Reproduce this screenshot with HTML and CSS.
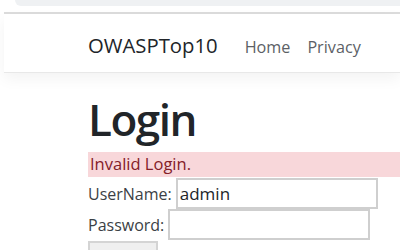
FILE: index.html
```html
<!DOCTYPE html>
<html lang="en">
<head>
    <meta charset="UTF-8">
    <meta name="viewport" content="width=device-width, initial-scale=1.0">
    <title>Login - OWASPTop10</title>
    <link rel="stylesheet" href="styles.css">
</head>
<body>
    <div class="chrome"></div>
    <div class="page">
        <header class="navbar">
            <a class="brand" href="#">OWASPTop10</a>
            <nav class="links">
                <a href="#">Home</a>
                <a href="#">Privacy</a>
            </nav>
        </header>

        <main class="content">
            <h1>Login</h1>
            <div class="alert">Invalid Login.</div>
            <form class="login">
                <div class="row first">
                    <label for="user">UserName:</label>
                    <input id="user" type="text" value="admin">
                </div>
                <div class="row">
                    <label for="pass">Password:</label>
                    <input id="pass" type="password">
                </div>
                <button type="submit">Login</button>
            </form>
        </main>
    </div>
</body>
</html>
```

FILE: styles.css
```css
/* General Styles */
body {
    margin: 0;
    font-family: "Open Sans", "Noto Sans", sans-serif;
    color: #212529;
    background-color: #fff;
    overflow: hidden;
}
a {
    text-decoration: none;
}

/* Browser strip at the top */
.chrome {
    height: 6px;
    margin-left: 15px;
    background-color: #eff1f3;
    border-bottom-left-radius: 12px;
}
.page {
    margin-top: 6px;
    margin-left: 4px;
    border-top: 2px solid #dcdcdc;
}

/* Navbar */
.navbar {
    display: flex;
    align-items: baseline;
    height: 59px;
    box-sizing: border-box;
    padding: 17px 0 0 84px;
    border-bottom: 1px solid #e8e8e8;
    box-shadow: 0 6px 14px rgba(0, 0, 0, 0.05);
}
.brand {
    color: #212529;
    font-size: 20.3px;
    margin-right: 27px;
}
.links {
    display: flex;
    gap: 17px;
}
.links a {
    color: #5c5f66;
    font-size: 16.2px;
}

/* Content */
.content {
    padding-left: 84px;
}
h1 {
    font-size: 44px;
    font-weight: 600;
    line-height: 54px;
    margin: 19px 0 6px;
    letter-spacing: -1.5px;
}
.alert {
    background-color: #f8d7da;
    color: #842029;
    font-size: 16.5px;
    height: 25px;
    line-height: 23px;
    padding-left: 2px;
}
.row {
    display: flex;
    align-items: center;
    gap: 4px;
    font-size: 16px;
    color: #3b3f45;
}
.row.first {
    margin-top: 1px;
}
input {
    font-family: inherit;
    font-size: 17px;
    width: 202px;
    height: 31px;
    box-sizing: border-box;
    border: 2px solid #cfcfcf;
    padding: 0 2px;
    color: #212529;
}
button {
    margin-top: 1px;
    width: 70px;
    height: 44px;
    padding: 20px 0 0;
    background-color: #efefef;
    border: 2px solid #d4d4d4;
    font-family: inherit;
    font-size: 16px;
}
```
